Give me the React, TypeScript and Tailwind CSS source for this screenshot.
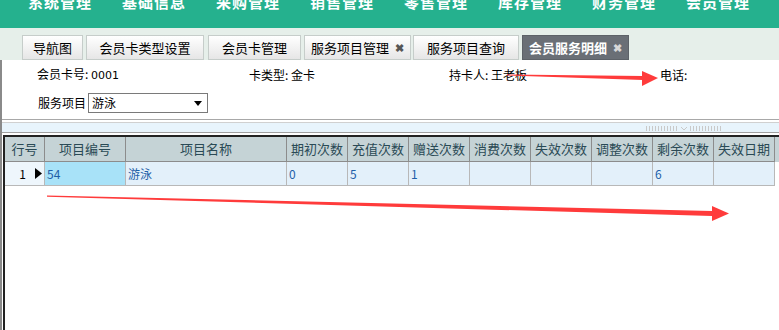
import React from "react";

const MENU = ["系统管理", "基础信息", "采购管理", "销售管理", "零售管理", "库存管理", "财务管理", "会员管理"];

const TABS = [
  { label: "导航图", w: "w-[61px]", ml: "ml-[22px]" },
  { label: "会员卡类型设置", w: "w-[118px]", ml: "ml-[3px]" },
  { label: "会员卡管理", w: "w-[93px]", ml: "ml-[4px]" },
  { label: "服务项目管理", w: "w-[107px]", ml: "ml-[3px]", close: true },
  { label: "服务项目查询", w: "w-[106px]", ml: "ml-[2px]" },
  { label: "会员服务明细", w: "w-[107px]", ml: "ml-[3px]", close: true, active: true },
];

const COLS = [
  { label: "行号", w: "w-[40px]" },
  { label: "项目编号", w: "w-[81px]" },
  { label: "项目名称", w: "w-[161px]" },
  { label: "期初次数", w: "w-[61px]" },
  { label: "充值次数", w: "w-[61px]" },
  { label: "赠送次数", w: "w-[61px]" },
  { label: "消费次数", w: "w-[61px]" },
  { label: "失效次数", w: "w-[61px]" },
  { label: "调整次数", w: "w-[61px]" },
  { label: "剩余次数", w: "w-[61px]" },
  { label: "失效日期", w: "w-[61px]" },
];

const ROW = ["54", "游泳", "0", "5", "1", "", "", "", "6", ""];

const font = "font-['SimSun','Noto_Sans_CJK_SC',sans-serif]";

function Grip() {
  return (
    <div className="absolute left-[646px] top-[126px] flex items-center gap-[3px]">
      <div className="h-[5px] w-[32px] bg-[repeating-linear-gradient(90deg,#c9c9c9_0_1px,transparent_1px_3px)]" />
      <svg width="6" height="4" viewBox="0 0 6 4"><path d="M0 0 L3 3 L6 0" fill="none" stroke="#c9c9c9" /></svg>
      <div className="h-[5px] w-[32px] bg-[repeating-linear-gradient(90deg,#c9c9c9_0_1px,transparent_1px_3px)]" />
    </div>
  );
}

function Arrows() {
  return (
    <svg className="pointer-events-none absolute left-0 top-0" width="779" height="330">
      <polygon points="507,74.5 643,76 643,80 507,75.5" fill="#ff3b3b" />
      <polygon points="642,71 658,78 642,86" fill="#ff3b3b" />
      <polygon points="47,195.5 712,211 712,216 47,196.8" fill="#ff3b3b" />
      <polygon points="712,206 729,213.5 712,221" fill="#ff3b3b" />
    </svg>
  );
}

export default function App() {
  return (
    <div className={`relative h-[330px] w-[779px] overflow-hidden bg-white text-[12px] ${font}`}>
      {/* top menu */}
      <div className="flex h-[28px] overflow-hidden bg-[#25b18e] pl-[28px]">
        {MENU.map((m) => (
          <div key={m} className="-mt-[6px] w-[94px] shrink-0 text-[15px] font-bold leading-[16px] tracking-[1px] text-white">
            {m}
          </div>
        ))}
      </div>

      {/* tabs */}
      <div className="flex h-[32px] items-end bg-[#e6efea]">
        {TABS.map((t) => (
          <div
            key={t.label}
            className={`${t.w} ${t.ml} flex h-[25px] shrink-0 items-center justify-center gap-[6px] border text-[13px] ${
              t.active
                ? "border-[#5d6268] bg-[#6a6f76] font-bold text-white"
                : "border-[#c6cdca] bg-[linear-gradient(#ffffff,#e6e6e6)] text-black"
            }`}
          >
            <span>{t.label}</span>
            {t.close && <span className={`text-[11px] font-bold ${t.active ? "text-[#d8d8d8]" : "text-[#555]"}`}>✖</span>}
          </div>
        ))}
      </div>

      {/* content */}
      <div className="flex h-[270px] flex-col border-l-2 border-[#8a8a8a]">
        <div className="flex h-[30px] items-center text-black">
          <div className="w-[247px] pl-[35px]">会员卡号: <span className="font-['Tahoma','DejaVu_Sans',sans-serif] text-[11px]">0001</span></div>
          <div className="w-[200px]">卡类型: 金卡</div>
          <div className="w-[211px]">持卡人: 王老板</div>
          <div>电话:</div>
        </div>
        <div className="flex h-[26px] items-center pl-[36px]">
          <span className="mr-[2px]">服务项目</span>
          <div className="flex h-[20px] w-[120px] items-center justify-between border border-[#7a7a7a] pl-[3px] pr-[5px]">
            <span>游泳</span>
            <svg width="8" height="5" viewBox="0 0 8 5"><path d="M0 0 H8 L4 5 Z" fill="#000" /></svg>
          </div>
        </div>
        <div className="mt-[3px] h-[1px] bg-[#a8a8a8]" />
        <div className="mt-[2px] h-[1px] bg-[#d0d0d0]" />
        <div className="h-[9px] bg-[#e8f4fc]" />
        <div className="h-[1px] bg-[#a0a0a0]" />
        <div className="h-[2px]" />

        {/* grid */}
        <div className="flex-1 border-l-2 border-t-2 border-[#222] ml-[1px]">
          <div className="flex h-[25px] bg-[#c5d3d6] text-[13px] text-[#2a4a55]">
            {COLS.map((c) => (
              <div key={c.label} className={`${c.w} flex shrink-0 items-center justify-center border-b border-r border-[#8c8c8c]`}>
                {c.label}
              </div>
            ))}
          </div>
          <div className="flex h-[24px] text-[12px] text-[#1e5fa8]">
            <div className="flex w-[40px] shrink-0 items-center justify-end border-b border-r border-[#b8b8b8] bg-[#eef6fc] pr-[2px] text-black">
              <span className="mr-[9px]">1</span>
              <svg width="7" height="11" viewBox="0 0 7 11"><path d="M0 0 L7 5.5 L0 11 Z" fill="#000" /></svg>
            </div>
            {ROW.map((v, i) => (
              <div
                key={i}
                className={`${COLS[i + 1].w} flex shrink-0 items-center border-b border-r border-[#b8b8b8] pl-[2px] ${
                  i === 0 ? "bg-[#a8e2f8]" : "bg-[#e3f0fa]"
                }`}
              >
                {v}
              </div>
            ))}
          </div>
        </div>
      </div>

      <Grip />
      <Arrows />
    </div>
  );
}
